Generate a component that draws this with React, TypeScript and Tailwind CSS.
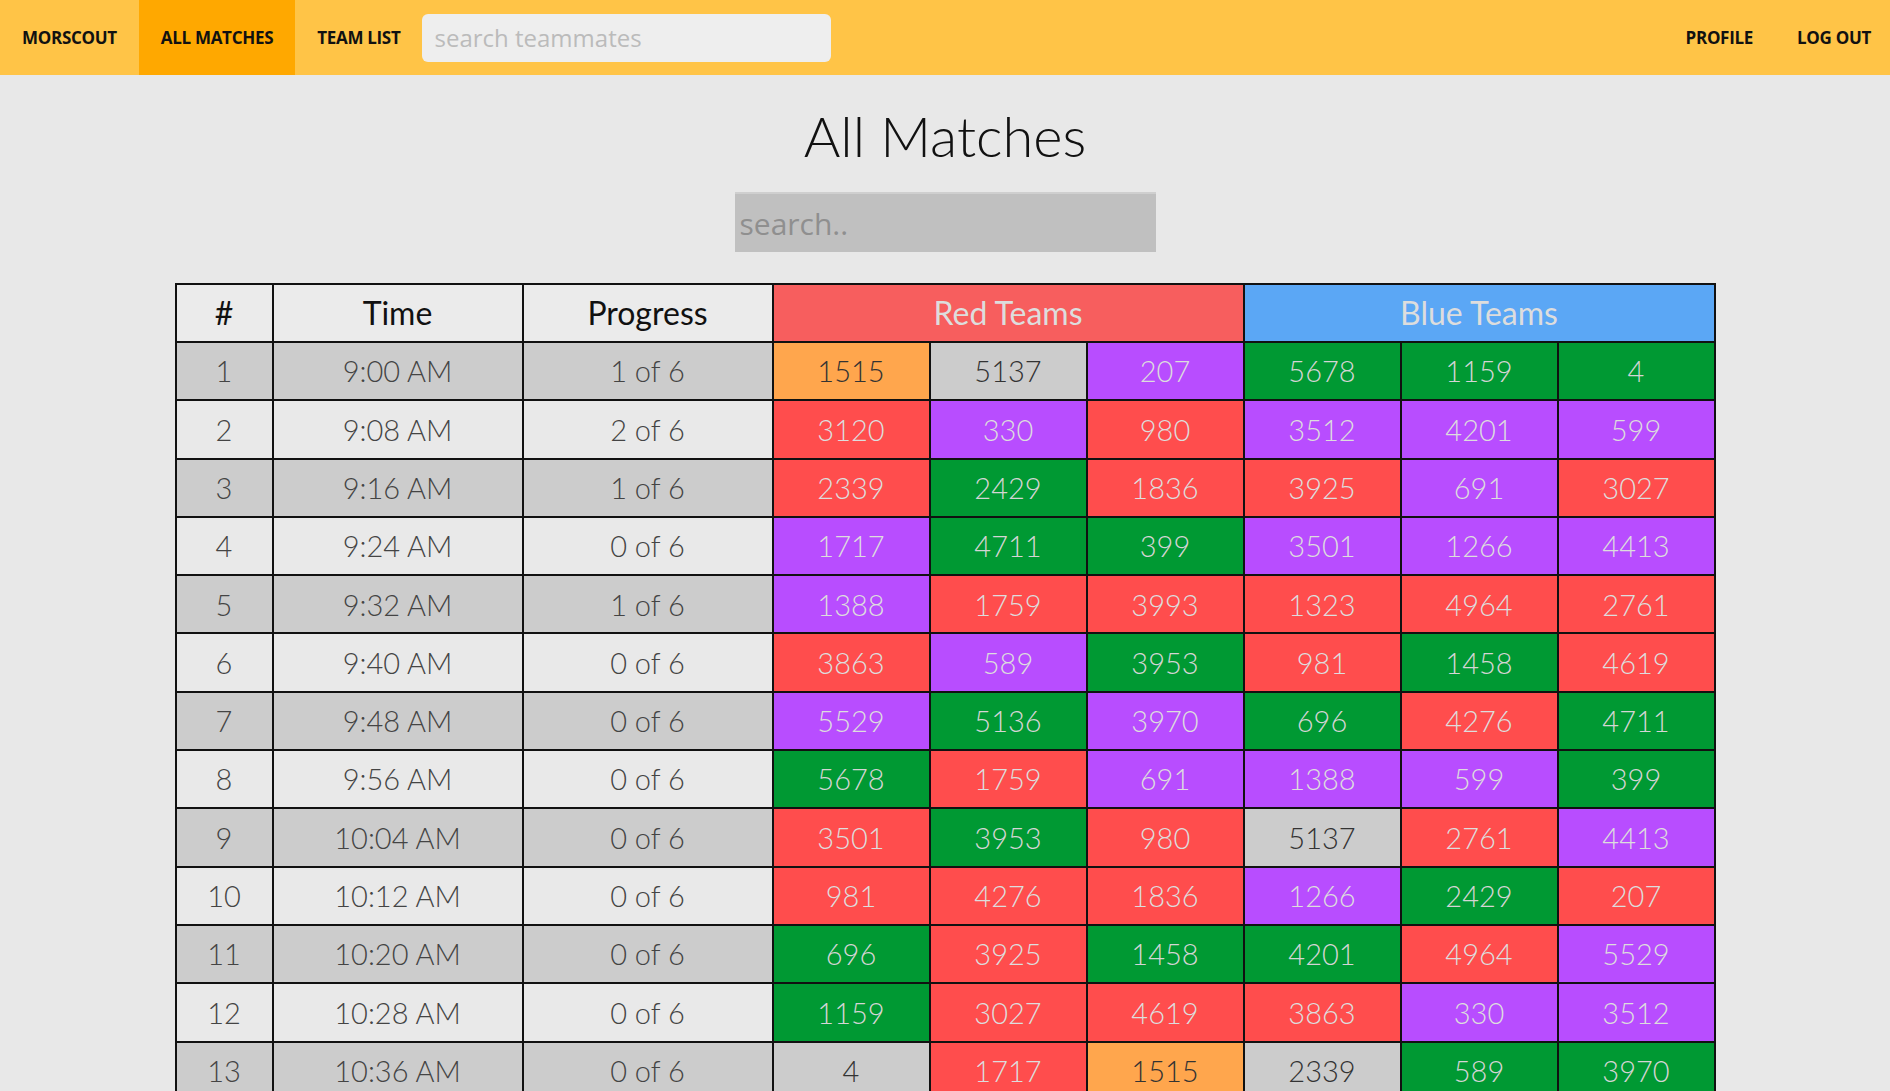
import React from "react"

type Color = "orange" | "gray" | "purple" | "green" | "red"

type Match = {
  time: string
  progress: string
  red: [number, Color][]
  blue: [number, Color][]
}

const cellColor: Record<Color, string> = {
  orange: "bg-[#ffa64d] text-[#333333]",
  gray: "bg-[#cccccc] text-[#333333]",
  purple: "bg-[#b84dff] text-[#dddddd]",
  green: "bg-[#009933] text-[#d5d5d5]",
  red: "bg-[#ff4d4d] text-[#dddddd]",
}

const matches: Match[] = [
  { time: "9:00 AM", progress: "1 of 6", red: [[1515, "orange"], [5137, "gray"], [207, "purple"]], blue: [[5678, "green"], [1159, "green"], [4, "green"]] },
  { time: "9:08 AM", progress: "2 of 6", red: [[3120, "red"], [330, "purple"], [980, "red"]], blue: [[3512, "purple"], [4201, "purple"], [599, "purple"]] },
  { time: "9:16 AM", progress: "1 of 6", red: [[2339, "red"], [2429, "green"], [1836, "red"]], blue: [[3925, "red"], [691, "purple"], [3027, "red"]] },
  { time: "9:24 AM", progress: "0 of 6", red: [[1717, "purple"], [4711, "green"], [399, "green"]], blue: [[3501, "purple"], [1266, "purple"], [4413, "purple"]] },
  { time: "9:32 AM", progress: "1 of 6", red: [[1388, "purple"], [1759, "red"], [3993, "red"]], blue: [[1323, "red"], [4964, "red"], [2761, "red"]] },
  { time: "9:40 AM", progress: "0 of 6", red: [[3863, "red"], [589, "purple"], [3953, "green"]], blue: [[981, "red"], [1458, "green"], [4619, "red"]] },
  { time: "9:48 AM", progress: "0 of 6", red: [[5529, "purple"], [5136, "green"], [3970, "purple"]], blue: [[696, "green"], [4276, "red"], [4711, "green"]] },
  { time: "9:56 AM", progress: "0 of 6", red: [[5678, "green"], [1759, "red"], [691, "purple"]], blue: [[1388, "purple"], [599, "purple"], [399, "green"]] },
  { time: "10:04 AM", progress: "0 of 6", red: [[3501, "red"], [3953, "green"], [980, "red"]], blue: [[5137, "gray"], [2761, "red"], [4413, "purple"]] },
  { time: "10:12 AM", progress: "0 of 6", red: [[981, "red"], [4276, "red"], [1836, "red"]], blue: [[1266, "purple"], [2429, "green"], [207, "red"]] },
  { time: "10:20 AM", progress: "0 of 6", red: [[696, "green"], [3925, "red"], [1458, "green"]], blue: [[4201, "green"], [4964, "red"], [5529, "purple"]] },
  { time: "10:28 AM", progress: "0 of 6", red: [[1159, "green"], [3027, "red"], [4619, "red"]], blue: [[3863, "red"], [330, "purple"], [3512, "purple"]] },
  { time: "10:36 AM", progress: "0 of 6", red: [[4, "gray"], [1717, "red"], [1515, "orange"]], blue: [[2339, "gray"], [589, "green"], [3970, "green"]] },
]

const navItem = "h-full flex items-center px-[22px] text-[17px] font-bold text-[#111111] tracking-[-0.3px]"

export default function App() {
  return (
    <div className="min-h-screen bg-[#e8e8e8] font-['Lato',sans-serif]">
      {/* Navbar */}
      <div className="h-[75px] bg-[#ffc447] flex items-center justify-between font-['Open_Sans',sans-serif]">
        <div className="flex items-center h-full">
          <div className={navItem}>MORSCOUT</div>
          <div className={navItem + " bg-[#ffa800]"}>ALL MATCHES</div>
          <div className={navItem}>TEAM LIST</div>
          <input
            placeholder="search teammates"
            className="w-[409px] h-[48px] rounded-md bg-[#eeeeee] px-3 text-[24px] outline-none placeholder:text-[#bbbbbb]"
          />
        </div>
        <div className="flex items-center h-full">
          <div className={navItem}>PROFILE</div>
          <div className={navItem + " pr-[19px]"}>LOG OUT</div>
        </div>
      </div>

      {/* Title + search */}
      <div className="flex flex-col items-center">
        <h1 className="mt-[28px] text-[56px] font-light text-[#111111] leading-[66px]">All Matches</h1>
        <input
          placeholder="search.."
          className="mt-[23px] w-[421px] h-[60px] bg-[#c0c0c0] border-t-2 border-[#cfcfcf] px-[5px] text-[30px] font-['Open_Sans',sans-serif] outline-none placeholder:text-[#8f8f8f]"
        />
      </div>

      {/* Table */}
      <table className="mx-auto mt-[31px] w-[1541px] border-collapse table-fixed text-[29px]">
        <colgroup>
          <col className="w-[97px]" />
          <col className="w-[250px]" />
          <col className="w-[250px]" />
          <col />
          <col />
          <col />
          <col />
          <col />
          <col />
        </colgroup>
        <thead>
          <tr className="h-[58px] text-[32px]">
            <th className="border-2 border-[#111111] bg-[#ebebeb] font-normal text-[#111111]">#</th>
            <th className="border-2 border-[#111111] bg-[#ebebeb] font-normal text-[#111111]">Time</th>
            <th className="border-2 border-[#111111] bg-[#ebebeb] font-normal text-[#111111]">Progress</th>
            <th colSpan={3} className="border-2 border-[#111111] bg-[#f75e5e] font-normal text-[#dddddd]">Red Teams</th>
            <th colSpan={3} className="border-2 border-[#111111] bg-[#5ba7f5] font-normal text-[#dddddd]">Blue Teams</th>
          </tr>
        </thead>
        <tbody>
          {matches.map((m, i) => {
            const rowBg = i % 2 === 0 ? "bg-[#cccccc]" : "bg-[#e9e9e9]"
            const base = "border-2 border-[#111111] text-center font-light"
            return (
              <tr key={i} className="h-[58.3px]">
                <td className={`${base} ${rowBg} text-[#444444]`}>{i + 1}</td>
                <td className={`${base} ${rowBg} text-[#444444]`}>{m.time}</td>
                <td className={`${base} ${rowBg} text-[#444444]`}>{m.progress}</td>
                {[...m.red, ...m.blue].map(([team, c], j) => (
                  <td key={j} className={`${base} ${cellColor[c]}`}>
                    {team}
                  </td>
                ))}
              </tr>
            )
          })}
        </tbody>
      </table>
    </div>
  )
}
